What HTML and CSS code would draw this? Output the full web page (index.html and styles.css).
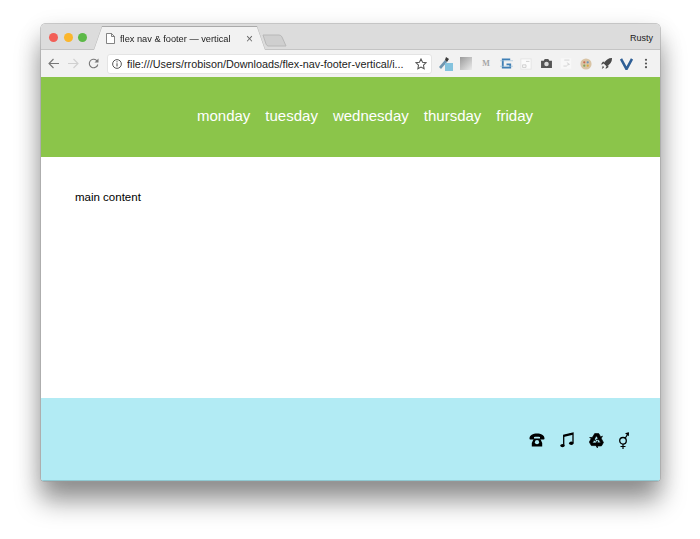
FILE: index.html
```html
<!DOCTYPE html>
<html lang="en">
<head>
<meta charset="utf-8">
<title>flex nav &amp; footer — vertical</title>
<link rel="stylesheet" href="styles.css">
</head>
<body>
<div class="window">
  <div class="titlebar">
    <div class="lights"><i class="light red"></i><i class="light yellow"></i><i class="light green"></i></div>
    <div class="tab-wrap">
      <div class="tab">
        <svg class="tab-page" width="9" height="11" viewBox="0 0 9 11"><path d="M.5.5h5l3 3v7h-8z M5.500.5v3h3" fill="#fff" stroke="#666" stroke-width=".8"/></svg>
        <span class="tab-title">flex nav &amp; footer — vertical</span>
        <span class="tab-close">×</span>
      </div>
    </div>
    <svg class="new-tab" width="25" height="13" viewBox="0 0 25 13"><path d="M1 1h16q2 0 3 2l4 9H6q-1 0-2-2z" fill="#cfcfcf" stroke="#b8b8b8"/></svg>
    <span class="user">Rusty</span>
  </div>
  <div class="toolbar">
    <span class="tool"><svg width="11" height="11" viewBox="0 0 11 11"><path d="M11 5.500H1M5.500 1 1 5.500 5.500 10" fill="none" stroke="#777" stroke-width="1.100"/></svg></span>
    <span class="tool"><svg width="11" height="11" viewBox="0 0 11 11"><path d="M0 5.500h10M5.500 1 10 5.500 5.500 10" fill="none" stroke="#d0d0d0" stroke-width="1.100"/></svg></span>
    <span class="tool"><svg width="11" height="11" viewBox="0 0 11 11"><path d="M9.800 6.500A4.300 4.300 0 1 1 8.500 2.300L9.700 3.500" fill="none" stroke="#777" stroke-width="1.100"/><path d="M10.500.5v4H6.500z" fill="#777"/></svg></span>
    <div class="omnibox">
      <svg class="info" width="10" height="10" viewBox="0 0 11 11"><circle cx="5.500" cy="5.500" r="4.800" fill="none" stroke="#444"/><path d="M5.500 4.700v3.500M5.500 2.500v1.200" stroke="#444" stroke-width="1.100"/></svg>
      <span class="url">file:///Users/rrobison/Downloads/flex-nav-footer-vertical/i...</span>
      <svg class="star" width="12" height="12" viewBox="0 0 13 13"><path d="m6.500 1 1.700 3.600 3.800.5-2.800 2.700.7 3.900-3.400-1.900-3.400 1.900.7-3.900L1 5.100l3.800-.5z" fill="none" stroke="#555" stroke-width="1.100"/></svg>
    </div>
    <div class="extensions">
      <span class="ext"><svg width="16" height="16" viewBox="0 0 16 16"><path d="M1 11 7 4l2 2-6 7z" fill="#6f96b0"/><path d="m8 1 3 2-2 3-2-2z" fill="#3a3a3a"/><rect x="7" y="7" width="8" height="8" fill="#84c3de"/></svg></span>
      <span class="ext"><i class="swatch"></i></span>
      <span class="ext gmail">M</span>
      <span class="ext"><svg width="13" height="13" viewBox="0 0 14 14"><path d="M11 2.500H3v9h8V8H7" fill="none" stroke="#3f7fb5" stroke-width="2"/><path d="M0 4h14M0 10h14" stroke="#9cc0da" stroke-width=".7"/></svg></span>
      <span class="ext"><svg width="12" height="12" viewBox="0 0 14 14"><rect x="1" y="1" width="12" height="12" fill="#fafafa" stroke="#e3e3e3"/><path d="M3 8h4v3H3zM7 4h4" fill="none" stroke="#c9c9c9"/></svg></span>
      <span class="ext"><svg width="13" height="10" viewBox="0 0 14 11"><path d="M1 2h3l1-2h4l1 2h3v8H1z" fill="#555"/><circle cx="7" cy="5.500" r="2.500" fill="#ddd"/></svg></span>
      <span class="ext"><svg width="12" height="13" viewBox="0 0 14 14"><rect x="1" y="1" width="12" height="12" fill="#f8f8f8"/><path d="M5 3h6M8 6l3 2-3 1M4 10h4" fill="none" stroke="#cfcfcf"/></svg></span>
      <span class="ext"><svg width="12" height="12" viewBox="0 0 14 14"><circle cx="7" cy="7" r="6.500" fill="#d9c4a5"/><circle cx="5" cy="5" r="1.300" fill="#c9694c"/><circle cx="9" cy="5" r="1.300" fill="#6b93b8"/><circle cx="5" cy="9" r="1.300" fill="#80a45c"/><circle cx="9" cy="9" r="1.300" fill="#d8a93f"/></svg></span>
      <span class="ext"><svg width="13" height="13" viewBox="0 0 14 14"><path d="M13 1Q7 1 4 7l3 3q6-3 6-9zM3.500 7.500 1 8l2-3h2zM6.500 10.500 6 13l3-2V9zM3 9.500l1.500 1.500L2 13z" fill="#4a4a4a"/></svg></span>
      <span class="ext"><svg width="13" height="12" viewBox="0 0 14 13"><path d="M1 1l6 11 6-11" fill="none" stroke="#2f5f96" stroke-width="2.800"/></svg></span>
      <span class="ext"><svg width="4" height="11" viewBox="0 0 4 12"><circle cx="2" cy="2" r="1.200" fill="#555"/><circle cx="2" cy="6" r="1.200" fill="#555"/><circle cx="2" cy="10" r="1.200" fill="#555"/></svg></span>
    </div>
  </div>
  <nav class="nav">
    <a>monday</a><a>tuesday</a><a>wednesday</a><a>thursday</a><a>friday</a>
  </nav>
  <main class="main">main content</main>
  <footer class="footer">
    <svg class="icon" width="16" height="14" viewBox="0 0 16 14" aria-label="telephone"><path d="M.5 5.500C.5 2 4 .5 8 .5s7.500 1.500 7.500 5c0 .6-.4 1-1 1h-2.500c-.6 0-1-.4-1-1V4C9.500 3.600 6.500 3.600 5 4v1.500c0 .6-.4 1-1 1H1.500c-.6 0-1-.4-1-1z" fill="#000"/><path d="M4.800 5.500h6.400l2 4.500v3.500H2.800V10z" fill="#000"/><circle cx="8" cy="9.200" r="2.100" fill="#b2ebf4"/></svg>
    <svg class="icon" width="14" height="16" viewBox="0 0 14 16" aria-label="music"><path d="M3.700 13V3.300L13 1v10" fill="none" stroke="#000" stroke-width="1.300"/><path d="M3.700 3.300 13 1v1.800L3.700 5z" fill="#000"/><ellipse cx="2.500" cy="13.600" rx="2.200" ry="1.700" fill="#000"/><ellipse cx="11.300" cy="11.300" rx="2.200" ry="1.700" fill="#000"/></svg>
    <svg class="icon" width="15" height="15" viewBox="-7.500 -7.500 15 15" aria-label="recycle"><g id="arrow"><path d="M-4 -3.300-1.800-7H2.200L4.300-3.600 6-4.500 4-.8-.2-1l1.800-.9L.2-4.300h-.6L-2-1.500z" fill="#000" stroke="#000" stroke-width=".6" stroke-linejoin="round"/></g><use href="#arrow" transform="rotate(120)"/><use href="#arrow" transform="rotate(240)"/></svg>
    <svg class="icon" width="10" height="17" viewBox="0 0 10 17" aria-label="gender"><circle cx="4" cy="8.800" r="3.300" fill="none" stroke="#000" stroke-width="1.300"/><path d="M4 12v5M1.500 14.500h5M6.200 6.200 9.500 .8" stroke="#000" stroke-width="1.200" fill="none"/><path d="M6 1.200 9.800.3l.2 3.900z" fill="#000"/></svg>
  </footer>
</div>
</body>
</html>
```

FILE: styles.css
```css
* { box-sizing: border-box; }
html, body { margin: 0; height: 100%; background: #fff; overflow: hidden; }
body { padding: 24px 40px 0 41px; font-family: "Liberation Sans", Arial, sans-serif; }
.window {
  width: 619px;
  height: 457px;
  display: flex;
  flex-direction: column;
  border-radius: 4px 4px 3px 3px;
  overflow: hidden;
  box-shadow: 0 0 0 .5px #999, 0 20px 26px rgba(0,0,0,.4), 0 6px 24px rgba(0,0,0,.12);
}
.titlebar {
  height: 26px;
  flex: none;
  display: flex;
  align-items: flex-end;
  background: #dcdcdc;
  border-bottom: 1px solid #c4c4c4;
  padding-left: 8px;
}
.lights { display: flex; gap: 5.500px; align-self: center; margin-top: 1px; }
.light { width: 9px; height: 9px; border-radius: 50%; display: block; }
.red { background: #f25f57; }
.yellow { background: #fbb62c; }
.green { background: #5cb947; }
.tab-wrap {
  flex: none;
  margin-left: 7px;
  margin-bottom: -1px;
  filter: drop-shadow(0 -.5px .3px #aaa);
}
.tab {
  width: 171px;
  height: 23px;
  display: flex;
  align-items: center;
  padding: 0 0 0 12px;
  background: #f2f2f2;
  clip-path: polygon(0 100%, 8px 0, 163px 0, 171px 100%);
  font-size: 9.250px;
  color: #222;
}
.tab-page { flex: none; }
.tab-title { margin-left: 5px; white-space: nowrap; }
.tab-close { margin-left: auto; margin-right: 12px; font-size: 12px; color: #666; line-height: 1; }
.new-tab { margin-left: -3px; margin-bottom: 2px; flex: none; }
.user { margin-left: auto; margin-right: 7px; align-self: center; margin-top: 2px; font-size: 9px; color: #222; }
.toolbar {
  height: 27px;
  flex: none;
  display: flex;
  align-items: center;
  background: #f2f2f2;
  padding-left: 2px;
}
.tool { width: 20px; flex: none; display: flex; justify-content: center; }
.omnibox {
  width: 325px;
  height: 20px;
  margin-left: 4px;
  display: flex;
  align-items: center;
  gap: 5px;
  background: #fff;
  border: 1px solid #e4e4e4;
  border-radius: 3px;
  padding: 0 4px;
}
.info { flex: none; }
.url { font-size: 10.800px; color: #222; white-space: nowrap; overflow: hidden; flex: 1; }
.star { flex: none; }
.extensions { display: grid; grid-template-columns: repeat(11, 20px); margin-left: 4px; align-items: center; }
.ext { display: flex; justify-content: center; align-items: center; height: 16px; }
.swatch { display: block; width: 12px; height: 13px; background: linear-gradient(135deg, #9a9a9a, #ececec); }
.gmail { font: bold 8px "Liberation Serif", serif; color: #a5a5a5; }
.nav {
  height: 80px;
  flex: none;
  display: flex;
  align-items: center;
  justify-content: center;
  gap: 15px;
  background: #8bc54a;
  color: #fff;
  font-size: 15px;
  padding: 0 0 4px 29px;
}
.main {
  flex: 1;
  background: #fff;
  padding: 33px 34px;
  font-size: 11.500px;
  line-height: 14px;
  color: #000;
}
.footer {
  height: 83px;
  flex: none;
  display: flex;
  align-items: center;
  justify-content: flex-end;
  gap: 15px;
  padding: 2px 31px 0 0;
  background: #b2ebf4;
  border-bottom: 1px solid #8fc9d2;
}
.icon { flex: none; }
```
